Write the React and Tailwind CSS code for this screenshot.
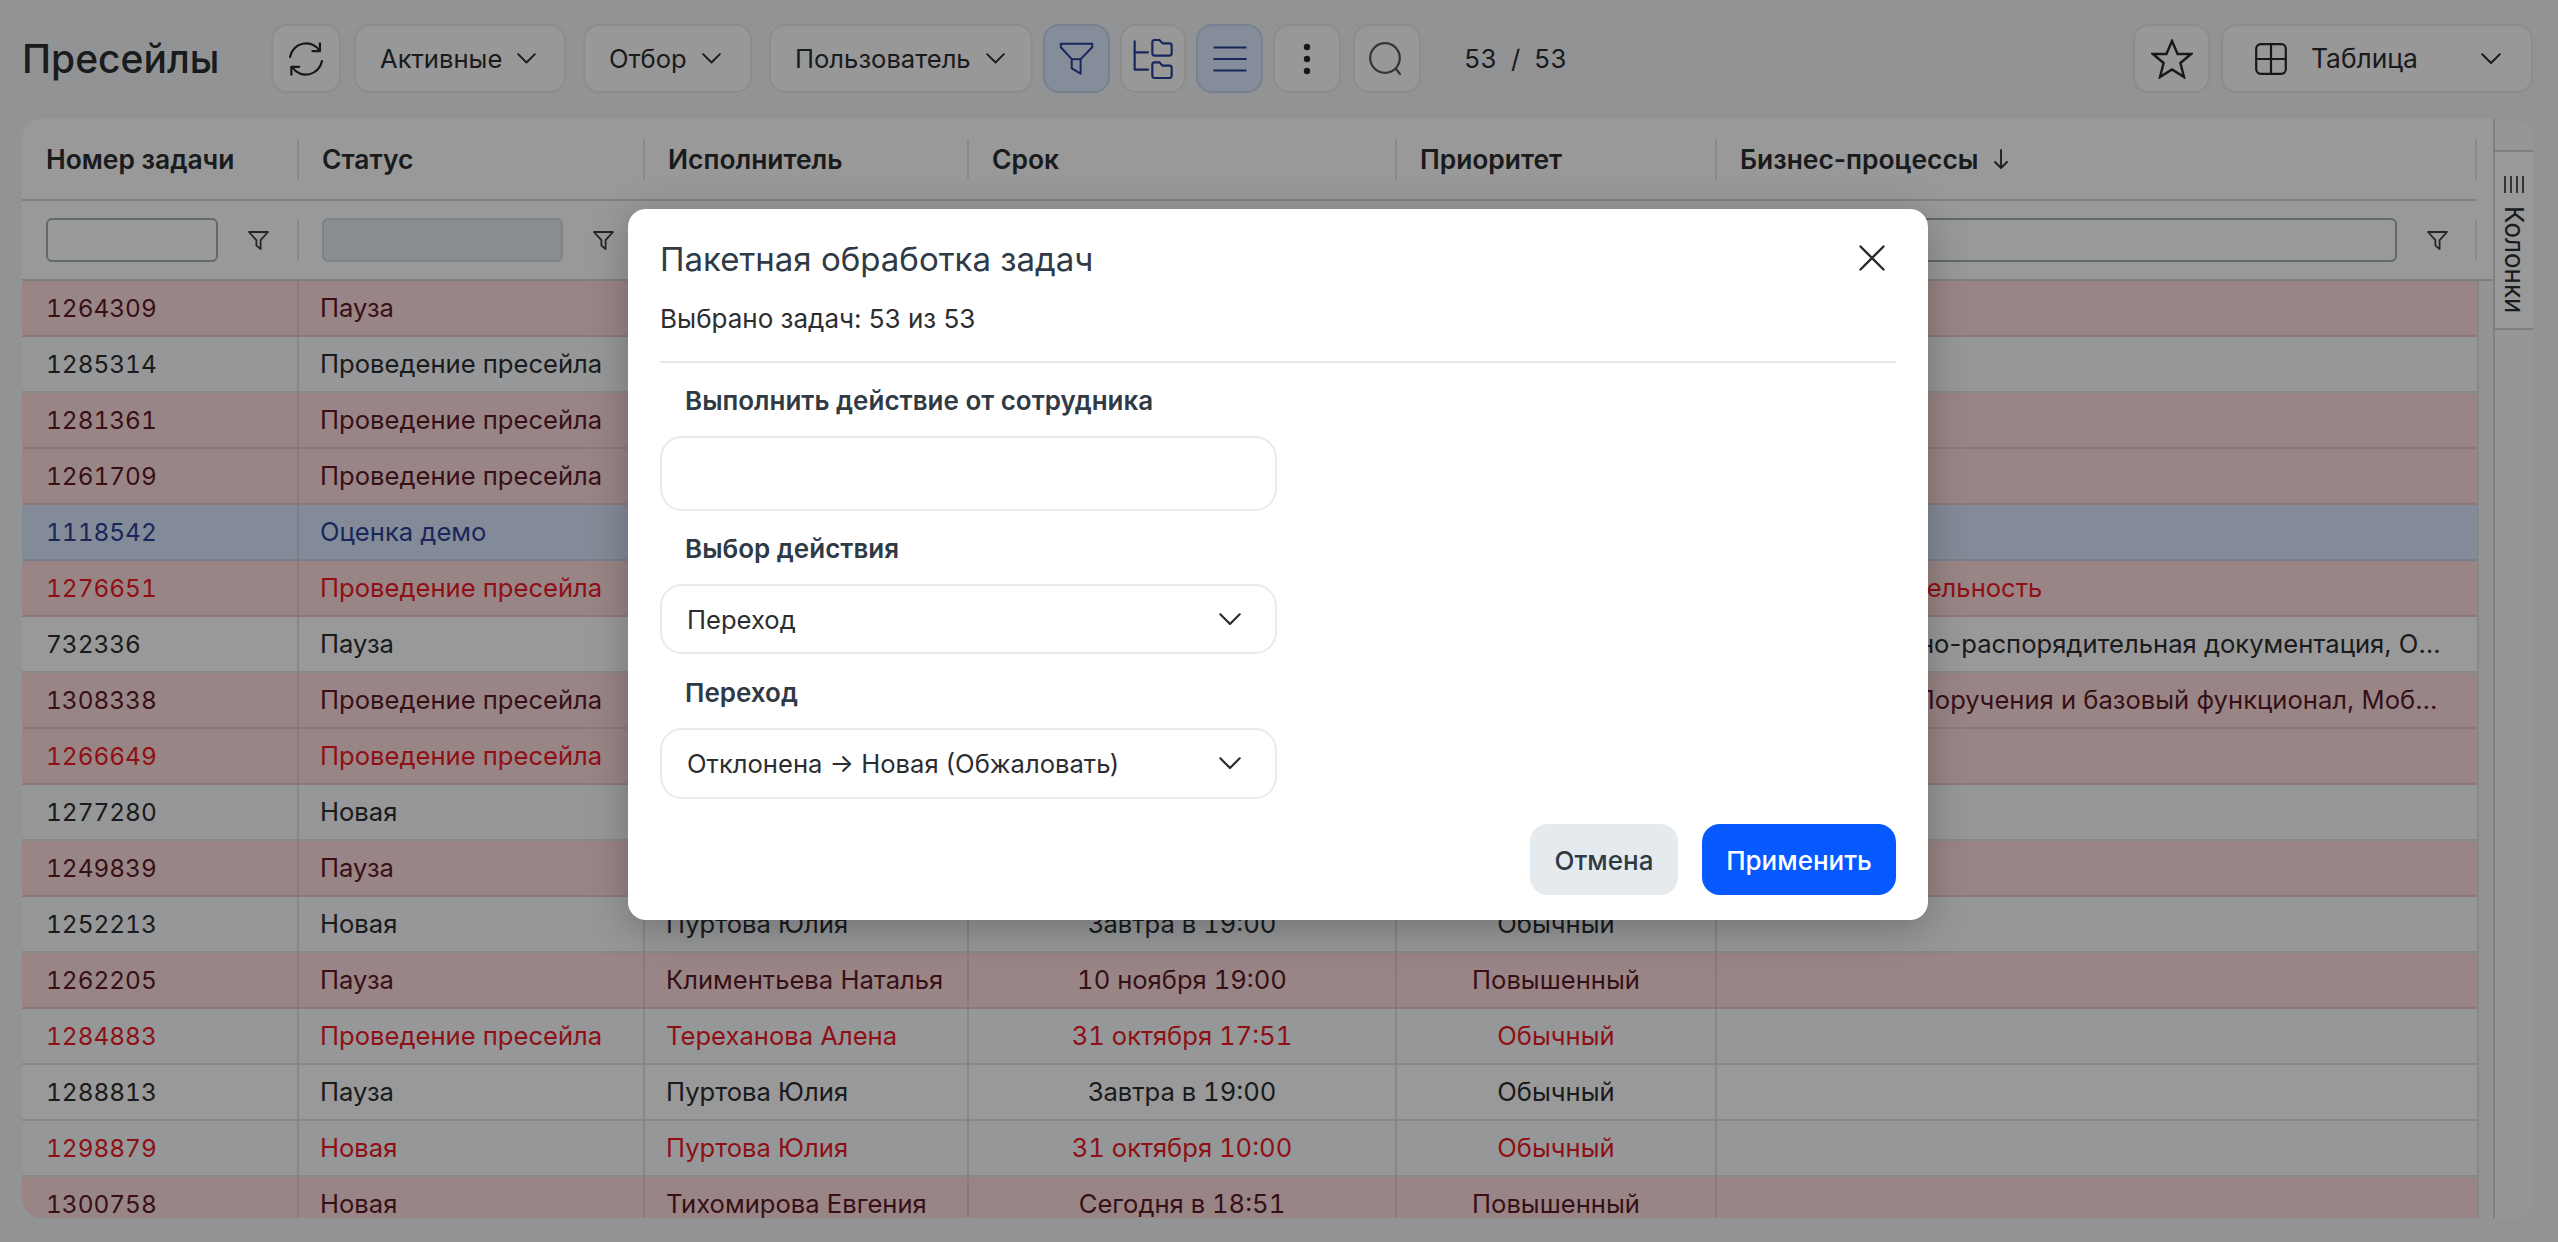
import React from "react";

const GRID = "grid grid-cols-[275px_346px_324px_428px_320px_762px]";

const ROWS = [
  ["1264309", "Пауза", "Пуртова Юлия", "Сегодня в 19:00", "Обычный", "", "pink", "dark"],
  ["1285314", "Проведение пресейла", "Тереханова Алена", "Завтра в 19:00", "Обычный", "", "cool", "plain"],
  ["1281361", "Проведение пресейла", "Пуртова Юлия", "Сегодня в 18:00", "Обычный", "", "pink", "dark"],
  ["1261709", "Проведение пресейла", "Тереханова Алена", "Сегодня в 17:00", "Обычный", "", "pink", "dark"],
  ["1118542", "Оценка демо", "Пуртова Юлия", "Завтра в 12:00", "Обычный", "", "blue", "navy"],
  ["1276651", "Проведение пресейла", "Пуртова Юлия", "31 октября 12:00", "Обычный", "Основная деятельность", "pink", "red"],
  ["732336", "Пауза", "Тереханова Алена", "Завтра в 19:00", "Обычный", "Организационно-распорядительная документация, Обращения", "plain", "plain"],
  ["1308338", "Проведение пресейла", "Пуртова Юлия", "Сегодня в 19:00", "Повышенный", "Контрагенты, Поручения и базовый функционал, Мобильное приложение", "pink", "dark"],
  ["1266649", "Проведение пресейла", "Тереханова Алена", "31 октября 15:00", "Обычный", "", "pink", "red"],
  ["1277280", "Новая", "Пуртова Юлия", "Завтра в 19:00", "Обычный", "", "cool", "plain"],
  ["1249839", "Пауза", "Пуртова Юлия", "Сегодня в 19:00", "Повышенный", "", "pink", "dark"],
  ["1252213", "Новая", "Пуртова Юлия", "Завтра в 19:00", "Обычный", "", "cool", "plain"],
  ["1262205", "Пауза", "Климентьева Наталья", "10 ноября 19:00", "Повышенный", "", "pink", "dark"],
  ["1284883", "Проведение пресейла", "Тереханова Алена", "31 октября 17:51", "Обычный", "", "cool", "red"],
  ["1288813", "Пауза", "Пуртова Юлия", "Завтра в 19:00", "Обычный", "", "plain", "plain"],
  ["1298879", "Новая", "Пуртова Юлия", "31 октября 10:00", "Обычный", "", "cool", "red"],
  ["1300758", "Новая", "Тихомирова Евгения", "Сегодня в 18:51", "Повышенный", "", "pink", "dark"],
];

const ROW_BG = {
  pink: "bg-[#ffdede] border-[#ecc8c8]",
  cool: "bg-[#fafcfe] border-[#dfe1e4]",
  plain: "bg-[#ffffff] border-[#e2e2e2]",
  blue: "bg-[#dce8fd] border-[#c8d4e8]",
};
const ROW_TEXT = {
  dark: "text-[#5c1a28]",
  plain: "text-[#2b2d31]",
  navy: "text-[#2d409c]",
  red: "text-[#ee1a26]",
};

function Chevron({ w = 19, className = "" }) {
  return (
    <svg width={w} height={w * 0.58} viewBox="0 0 20 11.6" fill="none" stroke="currentColor" strokeWidth="2" strokeLinecap="round" strokeLinejoin="round" className={className}>
      <path d="M1.2 1.2 10 10 18.8 1.2" />
    </svg>
  );
}

function ToolButton({ className = "", active = false, children }) {
  return (
    <div
      className={
        "h-[69px] rounded-[16px] border-2 flex items-center shrink-0 " +
        (active ? "bg-[#dcebff] border-[#c6d8f0] " : "bg-[#fdfdfd] border-[#e9e9e9] ") +
        className
      }
    >
      {children}
    </div>
  );
}

function TextButton({ label, className }) {
  return (
    <ToolButton className={"pl-[24px] text-[25.6px] text-[#2b2d31] " + className}>
      <span className="pt-[1px]">{label}</span>
      <Chevron className="ml-[15px]" />
    </ToolButton>
  );
}

function SmallFunnel() {
  return (
    <svg width="21" height="19" viewBox="0 0 21 19" fill="none" stroke="#3b4045" strokeWidth="1.8" strokeLinejoin="round" className="ml-[30px] shrink-0">
      <path d="M1 1H20L12.6 9.2V18L8.4 14.6V9.2Z" />
    </svg>
  );
}

function Toolbar() {
  return (
    <div className="flex items-center h-[69px] mt-[24px] ml-[22px] mr-[25px]">
      <h1 className="w-[249px] shrink-0 text-[39px] font-medium text-[#2b2d31] leading-none">Пресейлы</h1>

      <ToolButton className="w-[70px] justify-center">
        <svg width="34" height="34" viewBox="60 68 100 100" fill="none" stroke="#26282b" strokeWidth="6.5" strokeLinecap="round" strokeLinejoin="round">
          <path d="M63 112A48 48 0 0 1 150 93" />
          <path d="M151 72V95H129" />
          <path d="M157 124A48 48 0 0 1 70 143" />
          <path d="M67 164V141H90" />
        </svg>
      </ToolButton>
      <TextButton label="Активные" className="w-[212px] ml-[13px]" />
      <TextButton label="Отбор" className="w-[169px] ml-[17px]" />
      <TextButton label="Пользователь" className="w-[264px] ml-[17px]" />

      <ToolButton active className="w-[67px] ml-[10px] justify-center">
        <svg width="35" height="33" viewBox="60 70 105 100" fill="none" stroke="#28409a" strokeWidth="6" strokeLinejoin="round">
          <path d="M65 75H160V86L125 122V166L98 150V122L65 86Z" />
          <path d="M98 122H125" />
        </svg>
      </ToolButton>
      <ToolButton className="w-[66px] ml-[10px] justify-center">
        <svg width="40" height="40" viewBox="280 55 120 120" fill="none" stroke="#28409a" strokeWidth="6.5" strokeLinecap="round" strokeLinejoin="round">
          <path d="M285 62V147H325" />
          <path d="M285 95H325" />
          <path d="M338 65a7 7 0 0 1 7-7h14l10 10h20a7 7 0 0 1 7 7v23a7 7 0 0 1-7 7h-44a7 7 0 0 1-7-7z" />
          <path d="M338 132a7 7 0 0 1 7-7h14l10 10h20a7 7 0 0 1 7 7v23a7 7 0 0 1-7 7h-44a7 7 0 0 1-7-7z" />
        </svg>
      </ToolButton>
      <ToolButton active className="w-[67px] ml-[10px] justify-center">
        <svg width="34" height="26" viewBox="0 0 34 26" fill="none" stroke="#28409a" strokeWidth="2">
          <path d="M0.5 1.5H33.5M0.5 13H33.5M0.5 24.5H33.5" />
        </svg>
      </ToolButton>
      <ToolButton className="w-[68px] ml-[10px] justify-center">
        <svg width="8" height="32" viewBox="0 0 8 32" fill="#26282b">
          <circle cx="4" cy="4" r="3.2" />
          <circle cx="4" cy="16" r="3.2" />
          <circle cx="4" cy="28" r="3.2" />
        </svg>
      </ToolButton>
      <ToolButton className="w-[68px] ml-[12px] justify-center">
        <svg width="34" height="34" viewBox="0 0 34 34" fill="none" stroke="#55585c" strokeWidth="2.2" strokeLinecap="round" className="mr-[3px]">
          <circle cx="16" cy="16" r="14.8" />
          <path d="M27 27 31 32" />
        </svg>
      </ToolButton>

      <span className="ml-[43px] pt-[1px] text-[25.6px] text-[#2b2d31] whitespace-pre tabular-nums">53  /  53</span>

      <div className="ml-auto flex items-center gap-[11px]">
        <ToolButton className="w-[77px] justify-center">
          <svg width="42" height="40" viewBox="0 0 42 40" fill="none" stroke="#26282b" strokeWidth="2.4" strokeLinejoin="miter">
            <path d="M21 2 26.6 15H40L29.4 24 33 38 21 30.4 9 38 12.6 24 2 15H15.4Z" />
          </svg>
        </ToolButton>
        <ToolButton className="w-[312px] pl-[32px] text-[26.4px] text-[#2b2d31]">
          <svg width="32" height="32" viewBox="0 0 32 32" fill="none" stroke="#26282b" strokeWidth="2.2">
            <rect x="1.2" y="1.2" width="29.6" height="29.6" rx="4.5" />
            <path d="M16 1.2V30.8M1.2 16H30.8" />
          </svg>
          <span className="ml-[24px] pt-[1px]">Таблица</span>
          <Chevron w={20} className="ml-auto mr-[30px]" />
        </ToolButton>
      </div>
    </div>
  );
}

const HEADERS = ["Номер задачи", "Статус", "Исполнитель", "Срок", "Приоритет", "Бизнес-процессы"];
const FILTER_W = ["w-[172px]", "w-[241px]", "w-[219px]", "w-[323px]", "w-[215px]", "w-[657px]"];

function HeaderRow() {
  return (
    <div className={GRID + " h-[82px] w-[2455px] border-b-2 border-[#d5d5d5] text-[26.4px] font-semibold text-[#2b2d31]"}>
      {HEADERS.map((h, i) => (
        <div key={h} className="flex items-center">
          {i > 0 && <div className="w-[2px] h-[40px] bg-[#e3e3e3] shrink-0" />}
          <span className={(i > 0 ? "ml-[23px]" : "ml-[24px]") + " pt-[2px]"}>{h}</span>
          {i === 5 && (
            <>
              <svg width="14" height="20" viewBox="0 0 14 20" fill="none" stroke="#2b2d31" strokeWidth="1.8" strokeLinecap="round" strokeLinejoin="round" className="ml-[16px]">
                <path d="M7 1V19M1 13 7 19 13 13" />
              </svg>
              <div className="w-[2px] h-[40px] bg-[#e3e3e3] ml-auto" />
            </>
          )}
        </div>
      ))}
    </div>
  );
}

function FilterRow() {
  return (
    <div className="h-[80px] w-[2471px] border-b-2 border-[#d0d3d3]">
      <div className={GRID + " h-full w-[2455px]"}>
        {FILTER_W.map((w, i) => (
          <div key={w} className="flex items-center">
            {i > 0 && <div className="w-[2px] h-[40px] bg-[#e3e3e3] shrink-0" />}
            <div
              className={
                (i > 0 ? "ml-[23px] " : "ml-[24px] ") +
                w +
                " h-[44px] shrink-0 rounded-[6px] border-2 " +
                (i === 1 ? "bg-[#e2ecf0] border-[#d0dcdf]" : "bg-[#ffffff] border-[#9fb0b1]")
              }
            />
            <SmallFunnel />
            {i === 5 && <div className="w-[2px] h-[40px] bg-[#e3e3e3] ml-auto" />}
          </div>
        ))}
      </div>
    </div>
  );
}

function Row({ r }) {
  const [num, status, who, due, prio, biz, bg, tone] = r;
  const cell = "border-l-2 border-inherit flex items-center min-w-0 pt-[1px] ";
  return (
    <div className={GRID + " h-[56px] shrink-0 border-b-2 text-[25.6px] " + ROW_BG[bg] + " " + ROW_TEXT[tone]}>
      <div className="flex items-center pl-[24px] pt-[1px] text-[24.4px] tabular-nums">{num}</div>
      <div className={cell + "pl-[21px]"}>{status}</div>
      <div className={cell + "pl-[21px]"}>{who}</div>
      <div className={cell + "justify-center tabular-nums"}>{due}</div>
      <div className={cell + "justify-center"}>{prio}</div>
      <div className={cell + "pl-[23px] pr-[28px]"}>
        <span className="truncate">{biz}</span>
      </div>
    </div>
  );
}

function SideTab() {
  return (
    <div className="w-[40px] border-l-2 border-[#d6d6d6] bg-[#fbfbfb] flex flex-col">
      <div className="h-[33px] border-b-2 border-[#d6d6d6]" />
      <div className="h-[178px] border-b-2 border-[#d6d6d6] flex flex-col items-center pt-[24px] bg-[#ffffff]">
        <svg width="22" height="17" viewBox="0 0 22 17" fill="none" stroke="#2b2d31" strokeWidth="1.6">
          <path d="M2 0V17M8 0V17M14 0V17M20 0V17" />
        </svg>
        <span className="mt-[13px] text-[26px] leading-none text-[#2b2d31] [writing-mode:vertical-rl]">Колонки</span>
      </div>
    </div>
  );
}

function Field({ label, className = "", children }) {
  return (
    <>
      <div className={"h-[32px] flex items-center pl-[25px] pb-[2px] text-[26px] font-semibold text-[#2f3a45] " + className}>{label}</div>
      {children}
    </>
  );
}

function SelectBox({ value, h }) {
  return (
    <div className={"mt-[19px] w-[617px] rounded-[22px] border-2 border-[#e8eaec] bg-white flex items-center pl-[25px] pr-[34px] justify-between text-[25.6px] text-[#2b2d31] " + h}>
      <span className="pt-[2px]">{value}</span>
      <Chevron w={22} className="text-[#2b2d31]" />
    </div>
  );
}

function Modal() {
  return (
    <div className="absolute inset-0 bg-black/40 flex justify-center items-start pt-[209px]">
      <div className="w-[1300px] h-[711px] mr-[2px] bg-white rounded-[18px] shadow-[0_8px_40px_rgba(0,0,0,0.25)] px-[32px] pt-[31px] flex flex-col relative">
        <div className="h-[40px] flex items-center text-[33px] text-[#2f3a45]">Пакетная обработка задач</div>
        <svg width="26" height="26" viewBox="0 0 26 26" fill="none" stroke="#26282b" strokeWidth="2.4" strokeLinecap="round" className="absolute top-[36px] right-[43px]">
          <path d="M1.5 1.5 24.5 24.5M24.5 1.5 1.5 24.5" />
        </svg>
        <div className="mt-[22px] h-[32px] flex items-center text-[26px] text-[#2b2d31]">Выбрано задач: 53 из 53</div>
        <div className="mt-[27px] h-[2px] bg-[#e6e8ea]" />

        <Field label="Выполнить действие от сотрудника" className="mt-[22px]">
          <div className="mt-[19px] w-[617px] h-[75px] rounded-[22px] border-2 border-[#e8eaec] bg-white" />
        </Field>
        <Field label="Выбор действия" className="mt-[22px]">
          <SelectBox value="Переход" h="h-[70px]" />
        </Field>
        <Field label="Переход" className="mt-[23px]">
          <SelectBox value="Отклонена → Новая (Обжаловать)" h="h-[71px]" />
        </Field>

        <div className="mt-[25px] flex justify-end gap-[24px]">
          <div className="w-[148px] h-[71px] pt-[2px] rounded-[18px] bg-[#e4eaed] flex items-center justify-center text-[26px] font-medium text-[#2f3a45]">Отмена</div>
          <div className="w-[194px] h-[71px] pt-[2px] rounded-[18px] bg-[#0559ff] flex items-center justify-center text-[26px] font-medium text-white">Применить</div>
        </div>
      </div>
    </div>
  );
}

export default function App() {
  return (
    <div className="relative w-[2558px] h-[1242px] overflow-hidden bg-[#f3f5f8] [font-family:Inter,sans-serif] flex flex-col">
      <Toolbar />
      <div className="mt-[26px] ml-[22px] mr-[25px] h-[1099px] rounded-[20px] overflow-hidden bg-white flex">
        <div className="w-[2471px] flex flex-col">
          <HeaderRow />
          <FilterRow />
          <div className="flex-1 min-h-0 flex overflow-hidden bg-[#f6f7f9]">
            <div className="w-[2455px] flex flex-col">
              {ROWS.map((r) => (
                <Row key={r[0]} r={r} />
              ))}
            </div>
            <div className="flex-1 border-l-2 border-[#e2e2e2]" />
          </div>
        </div>
        <SideTab />
      </div>
      <Modal />
    </div>
  );
}
